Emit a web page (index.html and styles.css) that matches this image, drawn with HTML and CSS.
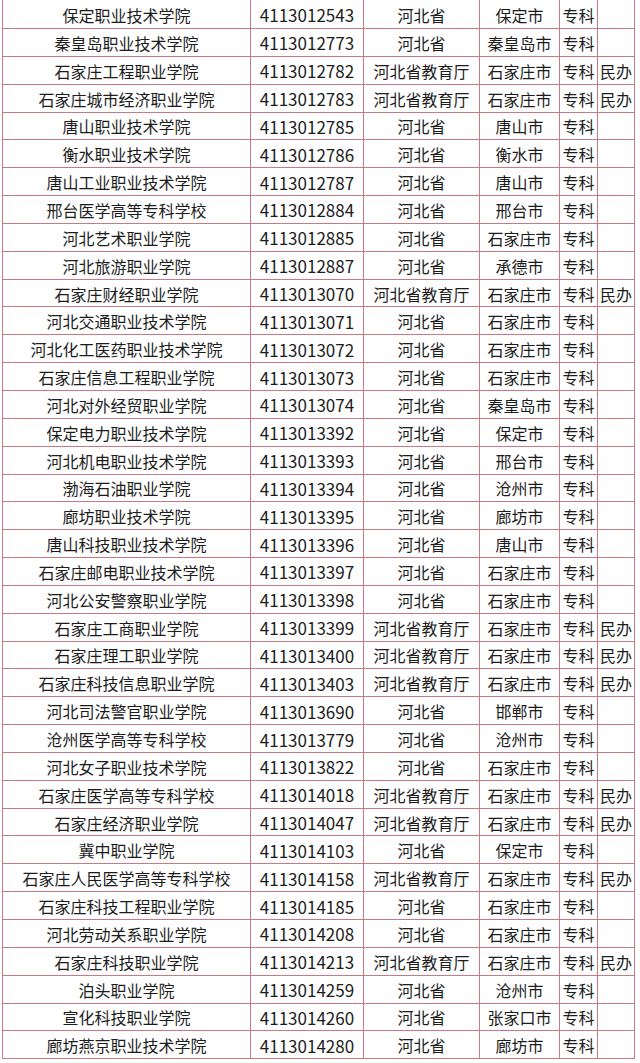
FILE: index.html
```html
<!DOCTYPE html>
<html lang="zh-CN">
<head>
<meta charset="utf-8">
<link rel="stylesheet" href="styles.css">
</head>
<body>
<div class="table">
<div class="row"><div class="c name">保定职业技术学院</div><div class="c code">4113012543</div><div class="c dept">河北省</div><div class="c city">保定市</div><div class="c lvl">专科</div><div class="c note"></div></div>
<div class="row"><div class="c name">秦皇岛职业技术学院</div><div class="c code">4113012773</div><div class="c dept">河北省</div><div class="c city">秦皇岛市</div><div class="c lvl">专科</div><div class="c note"></div></div>
<div class="row"><div class="c name">石家庄工程职业学院</div><div class="c code">4113012782</div><div class="c dept">河北省教育厅</div><div class="c city">石家庄市</div><div class="c lvl">专科</div><div class="c note">民办</div></div>
<div class="row"><div class="c name">石家庄城市经济职业学院</div><div class="c code">4113012783</div><div class="c dept">河北省教育厅</div><div class="c city">石家庄市</div><div class="c lvl">专科</div><div class="c note">民办</div></div>
<div class="row"><div class="c name">唐山职业技术学院</div><div class="c code">4113012785</div><div class="c dept">河北省</div><div class="c city">唐山市</div><div class="c lvl">专科</div><div class="c note"></div></div>
<div class="row"><div class="c name">衡水职业技术学院</div><div class="c code">4113012786</div><div class="c dept">河北省</div><div class="c city">衡水市</div><div class="c lvl">专科</div><div class="c note"></div></div>
<div class="row"><div class="c name">唐山工业职业技术学院</div><div class="c code">4113012787</div><div class="c dept">河北省</div><div class="c city">唐山市</div><div class="c lvl">专科</div><div class="c note"></div></div>
<div class="row"><div class="c name">邢台医学高等专科学校</div><div class="c code">4113012884</div><div class="c dept">河北省</div><div class="c city">邢台市</div><div class="c lvl">专科</div><div class="c note"></div></div>
<div class="row"><div class="c name">河北艺术职业学院</div><div class="c code">4113012885</div><div class="c dept">河北省</div><div class="c city">石家庄市</div><div class="c lvl">专科</div><div class="c note"></div></div>
<div class="row"><div class="c name">河北旅游职业学院</div><div class="c code">4113012887</div><div class="c dept">河北省</div><div class="c city">承德市</div><div class="c lvl">专科</div><div class="c note"></div></div>
<div class="row"><div class="c name">石家庄财经职业学院</div><div class="c code">4113013070</div><div class="c dept">河北省教育厅</div><div class="c city">石家庄市</div><div class="c lvl">专科</div><div class="c note">民办</div></div>
<div class="row"><div class="c name">河北交通职业技术学院</div><div class="c code">4113013071</div><div class="c dept">河北省</div><div class="c city">石家庄市</div><div class="c lvl">专科</div><div class="c note"></div></div>
<div class="row"><div class="c name">河北化工医药职业技术学院</div><div class="c code">4113013072</div><div class="c dept">河北省</div><div class="c city">石家庄市</div><div class="c lvl">专科</div><div class="c note"></div></div>
<div class="row"><div class="c name">石家庄信息工程职业学院</div><div class="c code">4113013073</div><div class="c dept">河北省</div><div class="c city">石家庄市</div><div class="c lvl">专科</div><div class="c note"></div></div>
<div class="row"><div class="c name">河北对外经贸职业学院</div><div class="c code">4113013074</div><div class="c dept">河北省</div><div class="c city">秦皇岛市</div><div class="c lvl">专科</div><div class="c note"></div></div>
<div class="row"><div class="c name">保定电力职业技术学院</div><div class="c code">4113013392</div><div class="c dept">河北省</div><div class="c city">保定市</div><div class="c lvl">专科</div><div class="c note"></div></div>
<div class="row"><div class="c name">河北机电职业技术学院</div><div class="c code">4113013393</div><div class="c dept">河北省</div><div class="c city">邢台市</div><div class="c lvl">专科</div><div class="c note"></div></div>
<div class="row"><div class="c name">渤海石油职业学院</div><div class="c code">4113013394</div><div class="c dept">河北省</div><div class="c city">沧州市</div><div class="c lvl">专科</div><div class="c note"></div></div>
<div class="row"><div class="c name">廊坊职业技术学院</div><div class="c code">4113013395</div><div class="c dept">河北省</div><div class="c city">廊坊市</div><div class="c lvl">专科</div><div class="c note"></div></div>
<div class="row"><div class="c name">唐山科技职业技术学院</div><div class="c code">4113013396</div><div class="c dept">河北省</div><div class="c city">唐山市</div><div class="c lvl">专科</div><div class="c note"></div></div>
<div class="row"><div class="c name">石家庄邮电职业技术学院</div><div class="c code">4113013397</div><div class="c dept">河北省</div><div class="c city">石家庄市</div><div class="c lvl">专科</div><div class="c note"></div></div>
<div class="row"><div class="c name">河北公安警察职业学院</div><div class="c code">4113013398</div><div class="c dept">河北省</div><div class="c city">石家庄市</div><div class="c lvl">专科</div><div class="c note"></div></div>
<div class="row"><div class="c name">石家庄工商职业学院</div><div class="c code">4113013399</div><div class="c dept">河北省教育厅</div><div class="c city">石家庄市</div><div class="c lvl">专科</div><div class="c note">民办</div></div>
<div class="row"><div class="c name">石家庄理工职业学院</div><div class="c code">4113013400</div><div class="c dept">河北省教育厅</div><div class="c city">石家庄市</div><div class="c lvl">专科</div><div class="c note">民办</div></div>
<div class="row"><div class="c name">石家庄科技信息职业学院</div><div class="c code">4113013403</div><div class="c dept">河北省教育厅</div><div class="c city">石家庄市</div><div class="c lvl">专科</div><div class="c note">民办</div></div>
<div class="row"><div class="c name">河北司法警官职业学院</div><div class="c code">4113013690</div><div class="c dept">河北省</div><div class="c city">邯郸市</div><div class="c lvl">专科</div><div class="c note"></div></div>
<div class="row"><div class="c name">沧州医学高等专科学校</div><div class="c code">4113013779</div><div class="c dept">河北省</div><div class="c city">沧州市</div><div class="c lvl">专科</div><div class="c note"></div></div>
<div class="row"><div class="c name">河北女子职业技术学院</div><div class="c code">4113013822</div><div class="c dept">河北省</div><div class="c city">石家庄市</div><div class="c lvl">专科</div><div class="c note"></div></div>
<div class="row"><div class="c name">石家庄医学高等专科学校</div><div class="c code">4113014018</div><div class="c dept">河北省教育厅</div><div class="c city">石家庄市</div><div class="c lvl">专科</div><div class="c note">民办</div></div>
<div class="row"><div class="c name">石家庄经济职业学院</div><div class="c code">4113014047</div><div class="c dept">河北省教育厅</div><div class="c city">石家庄市</div><div class="c lvl">专科</div><div class="c note">民办</div></div>
<div class="row"><div class="c name">冀中职业学院</div><div class="c code">4113014103</div><div class="c dept">河北省</div><div class="c city">保定市</div><div class="c lvl">专科</div><div class="c note"></div></div>
<div class="row"><div class="c name">石家庄人民医学高等专科学校</div><div class="c code">4113014158</div><div class="c dept">河北省教育厅</div><div class="c city">石家庄市</div><div class="c lvl">专科</div><div class="c note">民办</div></div>
<div class="row"><div class="c name">石家庄科技工程职业学院</div><div class="c code">4113014185</div><div class="c dept">河北省</div><div class="c city">石家庄市</div><div class="c lvl">专科</div><div class="c note"></div></div>
<div class="row"><div class="c name">河北劳动关系职业学院</div><div class="c code">4113014208</div><div class="c dept">河北省</div><div class="c city">石家庄市</div><div class="c lvl">专科</div><div class="c note"></div></div>
<div class="row"><div class="c name">石家庄科技职业学院</div><div class="c code">4113014213</div><div class="c dept">河北省教育厅</div><div class="c city">石家庄市</div><div class="c lvl">专科</div><div class="c note">民办</div></div>
<div class="row"><div class="c name">泊头职业学院</div><div class="c code">4113014259</div><div class="c dept">河北省</div><div class="c city">沧州市</div><div class="c lvl">专科</div><div class="c note"></div></div>
<div class="row"><div class="c name">宣化科技职业学院</div><div class="c code">4113014260</div><div class="c dept">河北省</div><div class="c city">张家口市</div><div class="c lvl">专科</div><div class="c note"></div></div>
<div class="row"><div class="c name">廊坊燕京职业技术学院</div><div class="c code">4113014280</div><div class="c dept">河北省</div><div class="c city">廊坊市</div><div class="c lvl">专科</div><div class="c note"></div></div>
</div>
</body>
</html>
```

FILE: styles.css
```css
html, body {
  margin: 0;
  padding: 0;
  background: #ffffff;
}

body {
  font-family: "Noto Sans CJK SC", "Noto Sans", sans-serif;
  color: #1c1c1c;
  font-size: 16px;
}

.table {
  margin-left: 2px;
  width: 632px;
  border-left: 1px solid #c77a85;
  display: flex;
  flex-direction: column;
}

.row {
  display: grid;
  grid-template-columns: 248px 113px 116px 80px 38px 37px;
  height: 27.85px;
  box-sizing: border-box;
  border-bottom: 1px solid #c77a85;
}

.row:first-child {
  height: 29px;
}

.c {
  border-right: 1px solid #c77a85;
  display: flex;
  align-items: center;
  justify-content: center;
  white-space: nowrap;
  overflow: visible;
  line-height: 1;
  padding-top: 1px;
}

.code {
  font-size: 17px;
}

.lvl, .note {
  justify-content: center;
}
```
